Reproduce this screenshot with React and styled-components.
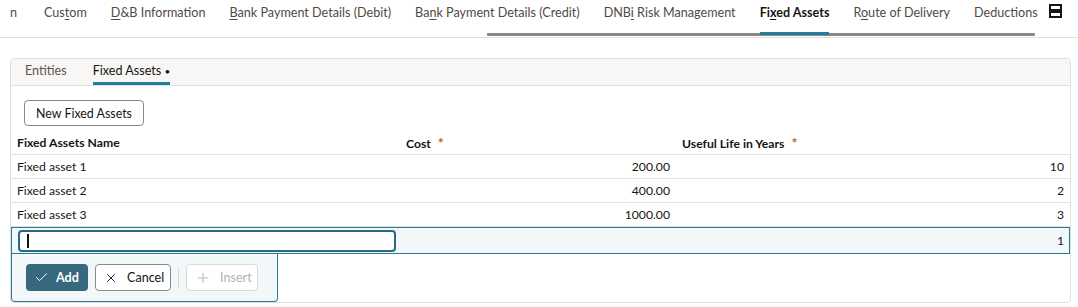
import React from 'react'
import styled, { createGlobalStyle } from 'styled-components'
import { Check, X, Plus } from 'lucide-react'

const GlobalStyle = createGlobalStyle`
  body {
    margin: 0;
    background: #ffffff;
    font-family: Lato, "Liberation Sans", Arial, sans-serif;
    color: #161513;
  }
`

// 상단 탭
const topTabs = [
  { label: 'n', lead: true },
  { pre: 'Cus', key: 't', post: 'om' },
  { pre: '', key: 'D', post: '&B Information' },
  { pre: '', key: 'B', post: 'ank Payment Details (Debit)' },
  { pre: 'Ba', key: 'n', post: 'k Payment Details (Credit)' },
  { pre: 'DNB', key: 'i', post: ' Risk Management' },
  { pre: 'Fi', key: 'x', post: 'ed Assets', active: true },
  { pre: 'R', key: 'o', post: 'ute of Delivery' },
  { label: 'Deductions' },
]

const rows = [
  { name: 'Fixed asset 1', cost: '200.00', life: '10' },
  { name: 'Fixed asset 2', cost: '400.00', life: '2' },
  { name: 'Fixed asset 3', cost: '1000.00', life: '3' },
]

const App = () => {
  return (
    <>
      <GlobalStyle />
      <TopBar>
        <TabStrip>
          {topTabs.map((t, i) => (
            <TopTab key={i} $active={t.active} $lead={t.lead}>
              {t.label ? t.label : (
                <>
                  {t.pre}
                  <u>{t.key}</u>
                  {t.post}
                </>
              )}
            </TopTab>
          ))}
          <ScrollThumb />
        </TabStrip>
        <MenuIcon>
          <svg width="13" height="14" viewBox="0 0 13 14">
            <rect x="1" y="1" width="11" height="5" fill="none" stroke="#161513" strokeWidth="2" />
            <rect x="1" y="8" width="11" height="5" fill="none" stroke="#161513" strokeWidth="2" />
          </svg>
        </MenuIcon>
      </TopBar>

      <Panel>
        <PanelTabs>
          <PanelTab>Entities</PanelTab>
          <PanelTab $active>
            Fixed Assets <Dot>•</Dot>
          </PanelTab>
        </PanelTabs>

        <PanelBody>
          <OutlineButton>New Fixed Assets</OutlineButton>

          <Grid>
            <HeadCell>Fixed Assets Name</HeadCell>
            <HeadCell>
              Cost <Req>*</Req>
            </HeadCell>
            <HeadCell>
              Useful Life in Years <Req>*</Req>
            </HeadCell>

            {rows.map((r) => (
              <React.Fragment key={r.name}>
                <Cell>{r.name}</Cell>
                <Cell $num>{r.cost}</Cell>
                <Cell $num>{r.life}</Cell>
              </React.Fragment>
            ))}
          </Grid>

          <EditRow>
            <EditCell>
              <TextBox>
                <Caret />
              </TextBox>
            </EditCell>
            <EditCell />
            <EditCell $num>1</EditCell>
          </EditRow>

          <RowToolbar>
            <SolidButton>
              <Check size={15} strokeWidth={1.6} />
              Add
            </SolidButton>
            <GhostButton $w={76}>
              <X size={14} strokeWidth={1.6} />
              Cancel
            </GhostButton>
            <Separator />
            <GhostButton $w={72} disabled>
              <Plus size={16} strokeWidth={1.4} />
              Insert
            </GhostButton>
          </RowToolbar>
        </PanelBody>
      </Panel>
    </>
  )
}

const TopBar = styled.div`
  display: flex;
  align-items: flex-start;
  height: 37px;
  border-bottom: 1px solid #e2dfdb;
`

const TabStrip = styled.div`
  position: relative;
  flex: none;
  display: flex;
  gap: 24px;
  box-sizing: border-box;
  padding-left: 10px;
  width: 1049px;
  height: 36px;
  overflow: hidden;
`

const TopTab = styled.div`
  position: relative;
  z-index: 1;
  flex: none;
  height: 32px;
  margin-right: ${(p) => (p.$lead ? '3px' : '0')};
  line-height: 26px;
  font-size: 12.6px;
  white-space: nowrap;
  color: ${(p) => (p.$active ? '#161513' : '#4f4a45')};
  font-weight: ${(p) => (p.$active ? 700 : 400)};
  border-bottom: 3px solid ${(p) => (p.$active ? '#227e9e' : 'transparent')};

  u {
    text-underline-offset: 2px;
  }
`

const ScrollThumb = styled.div`
  position: absolute;
  left: 487px;
  right: 14px;
  top: 33px;
  height: 3px;
  border-radius: 1px;
  background: #8b8680;
`

const MenuIcon = styled.div`
  display: flex;
  padding-top: 4px;
`

const Panel = styled.div`
  margin: 20px 7px 0 10px;
  border: 1px solid #e2dfdb;
  border-radius: 4px;
  overflow: hidden;
`

const PanelTabs = styled.div`
  display: flex;
  gap: 26px;
  height: 26px;
  padding-left: 14px;
  background: #f8f7f5;
  border-bottom: 1px solid #e2dfdb;
`

const PanelTab = styled.div`
  height: 23px;
  line-height: 24px;
  font-size: 12.6px;
  color: ${(p) => (p.$active ? '#161513' : '#5b5652')};
  border-bottom: 3px solid ${(p) => (p.$active ? '#227e9e' : 'transparent')};
`

const Dot = styled.span`
  font-size: 10px;
`

const PanelBody = styled.div`
  padding-top: 14px;
`

const OutlineButton = styled.button`
  margin-left: 13px;
  height: 26px;
  width: 120px;
  padding: 0;
  border: 1px solid #8d8984;
  border-radius: 4px;
  background: #ffffff;
  font-family: inherit;
  font-size: 12.4px;
  color: #161513;
`

const columns = '389px 276px 1fr'

const Grid = styled.div`
  display: grid;
  grid-template-columns: ${columns};
  margin-top: 5px;
`

const HeadCell = styled.div`
  height: 23px;
  line-height: 24px;
  padding: 0 6px;
  font-size: 12.2px;
  font-weight: 700;
  border-bottom: 1px solid #e5e2de;
`

const Req = styled.span`
  margin-left: 4px;
  font-size: 14px;
  color: #b3623c;
  font-weight: 700;
`

const Cell = styled.div`
  height: 23px;
  line-height: 24px;
  padding: 0 6px;
  font-size: 12.2px;
  text-align: ${(p) => (p.$num ? 'right' : 'left')};
  border-bottom: 1px solid #e5e2de;
`

const EditRow = styled.div`
  display: grid;
  grid-template-columns: ${columns};
  height: 25px;
  border: 1px solid #2b7b96;
  background: #f2f8fa;
`

const EditCell = styled.div`
  display: flex;
  align-items: center;
  justify-content: flex-end;
  padding: 0 5px 0 6px;
  font-size: 12.2px;
`

const TextBox = styled.div`
  display: flex;
  align-items: center;
  box-sizing: border-box;
  width: 100%;
  height: 22px;
  padding-left: 7px;
  border: 2px solid #2a6a80;
  border-radius: 4px;
  background: #ffffff;
`

const Caret = styled.span`
  width: 2px;
  height: 14px;
  background: #161513;
`

const RowToolbar = styled.div`
  display: flex;
  align-items: center;
  gap: 7px;
  box-sizing: border-box;
  width: 267px;
  height: 48px;
  padding: 0 0 0 14px;
  border: 1px solid #2b7b96;
  border-top: none;
  border-radius: 0 0 4px 4px;
  background: #f2f8fa;
`

const SolidButton = styled.button`
  display: flex;
  align-items: center;
  gap: 7px;
  height: 27px;
  width: 62px;
  padding: 0 0 0 8px;
  border: none;
  border-radius: 4px;
  background: #37687e;
  color: #ffffff;
  font-family: inherit;
  font-size: 12.6px;
  font-weight: 700;
`

const GhostButton = styled.button`
  display: flex;
  align-items: center;
  gap: 9px;
  height: 27px;
  width: ${(p) => p.$w}px;
  padding: 0 0 0 8px;
  border: 1px solid ${(p) => (p.disabled ? '#dcd9d5' : '#8d8984')};
  border-radius: 4px;
  background: #ffffff;
  color: ${(p) => (p.disabled ? '#b6b2ad' : '#161513')};
  font-family: inherit;
  font-size: 12.6px;
`

const Separator = styled.div`
  width: 1px;
  height: 20px;
  background: #dcd9d5;
`

export default App
